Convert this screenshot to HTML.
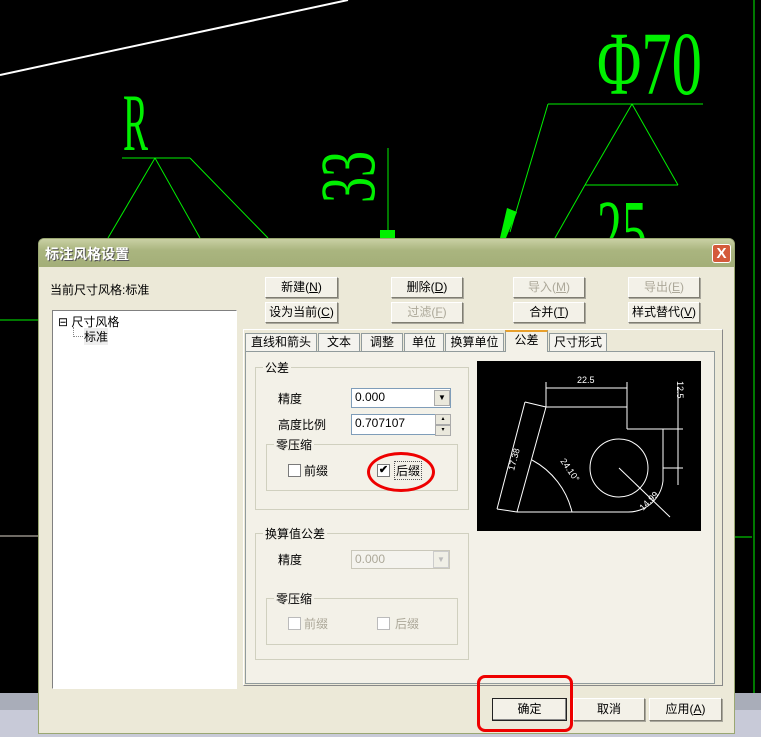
<!DOCTYPE html>
<html><head><meta charset="utf-8"><style>
*{margin:0;padding:0;box-sizing:border-box}
body{width:761px;height:737px;background:#000;position:relative;overflow:hidden;font-family:"Liberation Sans","Noto Sans CJK SC",sans-serif;font-size:12px;color:#000}
.a{position:absolute}
.dlg{left:38px;top:238px;width:697px;height:496px;background:#ece9d8;border:1px solid #9aa772;border-radius:6px 6px 0 0}
.title{left:0;top:0;width:695px;height:28px;background:linear-gradient(#c9d0a4,#aab57f 40%,#a3ae78);border-radius:5px 5px 0 0}
.title span{position:absolute;left:6px;top:5px;color:#fff;font-weight:bold;font-size:14px;text-shadow:1px 1px 0 #555}
.btn{position:absolute;height:21px;background:#f3f1e8;border:1px solid;border-color:#fff #7f7d72 #7f7d72 #fff;box-shadow:1px 1px 0 #a9a79c;text-align:center;line-height:19px;font-size:12px}
.dis{color:#aca899}
.tab{position:absolute;top:333px;height:18px;border:1px solid #919b9c;border-bottom:none;background:#f4f3ee;line-height:16px;text-align:center;font-size:12px}
.grp{position:absolute;border:1px solid #d0d0bf}
.grp b{position:absolute;left:7px;top:-9px;background:#f3f1e8;font-weight:normal;padding:0 2px}
.inp{position:absolute;background:#fff;border:1px solid #7f9db9;padding-left:3px;line-height:17px}
.dd{position:absolute;width:16px;background:#dcd9cc;border:1px solid #aaa}
.cb{position:absolute;width:13px;height:13px;border:1px solid #7a7a7a;background:#fff}
</style></head><body>
<svg class="a" style="left:0;top:0" width="761" height="737">
<line x1="0" y1="75" x2="348" y2="0" stroke="#fff" stroke-width="2"/>
<g stroke="#00f000" stroke-width="1" fill="none">
<line x1="122" y1="158" x2="190" y2="158"/>
<line x1="155" y1="158" x2="108" y2="238"/><line x1="155" y1="158" x2="200" y2="238"/><line x1="190" y1="158" x2="268" y2="238"/>
<line x1="388" y1="148" x2="388" y2="232"/>
<line x1="548" y1="104" x2="703" y2="104"/>
<line x1="548" y1="104" x2="510" y2="232"/>
<line x1="632" y1="104" x2="585" y2="185"/><line x1="632" y1="104" x2="678" y2="185"/><line x1="585" y1="185" x2="678" y2="185"/>
<line x1="585" y1="185" x2="555" y2="238"/>
<line x1="0" y1="320" x2="38" y2="320"/>
<line x1="735" y1="537" x2="752" y2="537"/>
<line x1="754" y1="0" x2="754" y2="693"/>
</g>
<polygon points="507,208 517,212 506,238 500,238" fill="#00f000"/>
<rect x="380" y="230" width="15" height="8" fill="#00f000"/>
<g fill="#00f000" font-family="Liberation Serif,serif">
<text x="123" y="150" font-size="82" textLength="25" lengthAdjust="spacingAndGlyphs">R</text>
<text x="597" y="94" font-size="90" textLength="105" lengthAdjust="spacingAndGlyphs">Φ70</text>
<text x="597" y="262" font-size="90" textLength="50" lengthAdjust="spacingAndGlyphs">25</text>
<text transform="translate(374,203) rotate(-90)" font-size="78" textLength="52" lengthAdjust="spacingAndGlyphs">33</text>
</g>
<line x1="0" y1="536" x2="38" y2="536" stroke="#ddd4c8"/>
<rect x="0" y="693" width="761" height="44" fill="#a9adb9"/>
<rect x="0" y="710" width="761" height="27" fill="#c8cad8"/>
</svg>
<div class="a dlg">
<div class="a title"><span>标注风格设置</span>
<div class="a" style="left:673px;top:5px;width:19px;height:19px;background:#d45a3b;border:1px solid #fff;border-radius:3px;color:#fff;font-weight:bold;font-size:15px;text-align:center;line-height:17px">X</div></div>
</div>
<div class="a" style="left:50px;top:281px">当前尺寸风格:标准</div>
<div class="a" style="left:52px;top:310px;width:185px;height:379px;background:#fff;border:1px solid;border-color:#808080 #fff #fff #808080"></div>
<div class="a" style="left:58px;top:313px">⊟ 尺寸风格</div>
<div class="a" style="left:73px;top:327px;width:10px;height:10px;border-left:1px dotted #888;border-bottom:1px dotted #888"></div>
<div class="a" style="left:84px;top:328px;background:#eee">标准</div>

<div class="btn" style="left:265px;top:277px;width:73px">新建(<u>N</u>)</div>
<div class="btn" style="left:391px;top:277px;width:72px">删除(<u>D</u>)</div>
<div class="btn dis" style="left:513px;top:277px;width:72px">导入(<u>M</u>)</div>
<div class="btn dis" style="left:628px;top:277px;width:72px">导出(<u>E</u>)</div>
<div class="btn" style="left:265px;top:302px;width:73px">设为当前(<u>C</u>)</div>
<div class="btn dis" style="left:391px;top:302px;width:72px">过滤(<u>F</u>)</div>
<div class="btn" style="left:513px;top:302px;width:72px">合并(<u>T</u>)</div>
<div class="btn" style="left:628px;top:302px;width:72px">样式替代(<u>V</u>)</div>

<div class="a" style="left:243px;top:329px;width:480px;height:357px;border:1px solid;border-color:#fff #888 #888 #fff"></div>
<div class="a" style="left:245px;top:351px;width:470px;height:333px;border:1px solid #919b9c;background:#f3f1e8"></div>
<div class="tab" style="left:245px;width:72px">直线和箭头</div>
<div class="tab" style="left:318px;width:42px">文本</div>
<div class="tab" style="left:361px;width:42px">调整</div>
<div class="tab" style="left:404px;width:40px">单位</div>
<div class="tab" style="left:445px;width:59px">换算单位</div>
<div class="tab" style="left:505px;top:330px;height:22px;width:43px;background:#f3f1e8;border-top:2px solid #e8a02c">公差</div>
<div class="tab" style="left:549px;width:58px">尺寸形式</div>

<div class="grp" style="left:255px;top:367px;width:214px;height:143px"><b>公差</b></div>
<div class="a" style="left:278px;top:390px">精度</div>
<div class="inp" style="left:351px;top:388px;width:100px;height:20px">0.000</div>
<div class="dd" style="left:434px;top:390px;height:16px;background:#eae8dc;font-size:8px;text-align:center;line-height:14px">▼</div>
<div class="a" style="left:278px;top:416px">高度比例</div>
<div class="inp" style="left:351px;top:414px;width:85px;height:21px">0.707107</div>
<div class="dd" style="left:435px;top:414px;height:11px;font-size:6px;text-align:center;line-height:9px;background:#eae8dc">▴</div>
<div class="dd" style="left:435px;top:425px;height:11px;font-size:6px;text-align:center;line-height:9px;background:#eae8dc">▾</div>
<div class="grp" style="left:266px;top:444px;width:192px;height:47px"><b>零压缩</b></div>
<div class="cb" style="left:288px;top:464px"></div>
<div class="a" style="left:304px;top:462px">前缀</div>
<div class="cb" style="left:377px;top:464px;font-size:11px;line-height:10px;text-align:center;font-weight:bold">✔</div>
<div class="a" style="left:394px;top:461px;border:1px dotted #555;padding:0 1px">后缀</div>
<div class="a" style="left:367px;top:452px;width:68px;height:40px;border:3px solid #e00;border-radius:50%"></div>

<div class="grp" style="left:255px;top:533px;width:214px;height:127px"><b>换算值公差</b></div>
<div class="a" style="left:278px;top:551px">精度</div>
<div class="inp dis" style="left:351px;top:550px;width:99px;height:19px;background:#f4f3ee;border-color:#c9c7ba">0.000</div>
<div class="dd" style="left:433px;top:551px;height:17px;background:#f0efe6;border-color:#ccc;color:#bbb;font-size:8px;text-align:center;line-height:15px">▼</div>
<div class="grp" style="left:266px;top:598px;width:192px;height:47px"><b>零压缩</b></div>
<div class="cb" style="left:288px;top:617px;border-color:#bbb"></div>
<div class="a dis" style="left:304px;top:615px">前缀</div>
<div class="cb" style="left:377px;top:617px;border-color:#bbb"></div>
<div class="a dis" style="left:395px;top:615px">后缀</div>

<svg class="a" style="left:477px;top:361px" width="224" height="170">
<rect width="224" height="170" fill="#000"/>
<g stroke="#fff" fill="none" stroke-width="1">
<line x1="69" y1="21" x2="69" y2="46"/><line x1="69" y1="27" x2="150" y2="27"/>
<line x1="69" y1="46" x2="150" y2="46"/><line x1="150" y1="21" x2="150" y2="68"/>
<line x1="150" y1="68" x2="206" y2="68"/><line x1="186" y1="68" x2="186" y2="107"/>
<line x1="186" y1="107" x2="206" y2="107"/>
<line x1="201" y1="26" x2="201" y2="124"/>
<path d="M186 107 L186 120 A35 35 0 0 1 151 151 L40 151"/>
<line x1="69" y1="46" x2="40" y2="151"/>
<line x1="48" y1="41" x2="69" y2="46"/><line x1="48" y1="41" x2="20" y2="148"/>
<line x1="20" y1="148" x2="40" y2="151"/>
<circle cx="142" cy="107" r="29"/>
<line x1="142" y1="107" x2="193" y2="156"/>
<path d="M55 99 A80 80 0 0 1 95 151"/>
</g>
<g fill="#fff" font-size="9" font-family="Liberation Sans,sans-serif">
<text x="100" y="22">22.5</text>
<text transform="translate(200,20) rotate(90)">12.5</text>
<text transform="translate(37,110) rotate(-75)">17.38</text>
<text transform="translate(83,100) rotate(55)">24.10°</text>
<text transform="translate(166,150) rotate(-45)">14.99</text>
</g>
</svg>

<div class="btn" style="left:492px;top:698px;width:75px;height:23px;border:1px solid #222;box-shadow:inset -1px -1px 0 #888;line-height:21px">确定</div>
<div class="btn" style="left:573px;top:698px;width:72px;height:23px;line-height:21px">取消</div>
<div class="btn" style="left:649px;top:698px;width:73px;height:23px;line-height:21px">应用(<u>A</u>)</div>
<div class="a" style="left:477px;top:675px;width:96px;height:57px;border:3px solid #e00;border-radius:8px"></div>
</body></html>
